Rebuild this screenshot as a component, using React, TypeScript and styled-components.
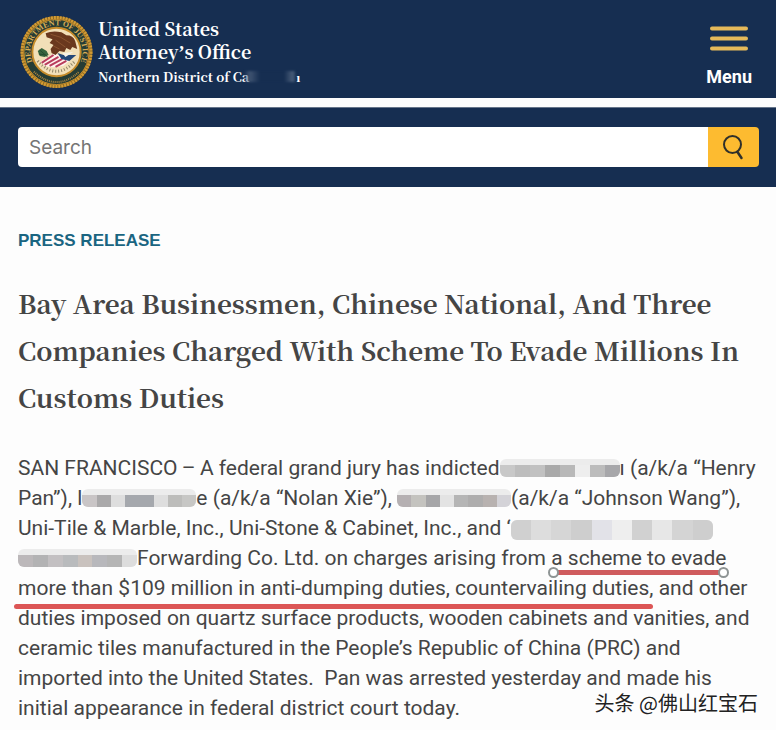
import React from "react";
import styled, { createGlobalStyle } from "styled-components";

const navy = "#162e51";
const gold = "#fdbb30";
const red = "#dc5656";
const sans = `Roboto, "Open Sans", sans-serif`;
const serif = `"Noto Serif CJK SC", "Source Serif Pro", "Liberation Serif", serif`;

const GlobalStyle = createGlobalStyle`
  * { box-sizing: border-box; }
  body { margin: 0; background: #fdfdfd; color: #454545; font-family: ${sans}; }
  h1, p { margin: 0; }
`;

const Page = styled.div`
  overflow-x: hidden;
`;

const Header = styled.header`
  display: flex;
  justify-content: space-between;
  align-items: center;
  height: 98px;
  padding: 6px 24px 0 20px;
  background: ${navy};
`;

const Brand = styled.a`
  display: flex;
  align-items: center;
  gap: 5px;
  color: #fff;
  text-decoration: none;
  font-family: ${serif};
  font-weight: 700;
`;

const BrandText = styled.span`
  display: flex;
  flex-direction: column;
`;

const BrandName = styled.span`
  font-size: 18px;
  line-height: 23px;
`;

const Apostrophe = styled.span`
  font-family: "Liberation Serif", serif;
`;

const District = styled.span`
  display: flex;
  align-items: center;
  font-size: 13px;
  line-height: 23px;
`;

const Smudge = styled.span`
  width: 52px;
  height: 11px;
  margin-left: -5px;
  filter: blur(1px);
  background: linear-gradient(90deg, transparent 0, #3f5371 6px, ${navy} 16px, ${navy} 40px, #4a5e7a 49px, transparent 100%);
`;

const MenuButton = styled.button`
  display: flex;
  flex-direction: column;
  align-items: center;
  gap: 15px;
  padding: 10px 0 0;
  border: 0;
  background: none;
  color: #fff;
  font: 700 18px/22px Roboto, sans-serif;
  cursor: pointer;
`;

const SearchBand = styled.form`
  display: flex;
  margin-top: 9px;
  padding: 19px 17px 20px 18px;
  border-top: 1px solid #66758a;
  background: ${navy};
`;

const SearchInput = styled.input`
  flex: 1;
  min-width: 0;
  height: 40px;
  padding: 0 11px;
  border: 0;
  border-radius: 4px 0 0 4px;
  background: #fff;
  color: #454545;
  font: 400 19px Inter, sans-serif;
  &::placeholder { color: #757575; opacity: 1; }
`;

const SearchButton = styled.button`
  display: grid;
  place-items: center;
  width: 51px;
  height: 40px;
  padding: 0;
  border: 0;
  border-radius: 0 4px 4px 0;
  background: ${gold};
  cursor: pointer;
`;

const Article = styled.main`
  position: relative;
  padding: 43px 18px 7px;
`;

const Kicker = styled.p`
  color: #1a6581;
  font-family: "Liberation Sans", sans-serif;
  font-size: 17px;
  font-weight: 700;
  line-height: 22px;
`;

const Title = styled.h1`
  margin-top: 27px;
  font-family: ${serif};
  font-size: 26px;
  font-weight: 700;
  line-height: 47px;
`;

const Body = styled.p`
  margin-top: 33px;
  font-size: 21px;
  line-height: 30px;
`;

const Line = styled.span`
  display: block;
  white-space: pre;
`;

const Mosaic = styled.span<{ $width: number; $tall?: boolean }>`
  display: inline-flex;
  width: ${(p) => p.$width}px;
  height: ${(p) => (p.$tall ? 20 : 18)}px;
  padding-top: ${(p) => (p.$tall ? 0 : 6)}px;
  vertical-align: ${(p) => (p.$tall ? "-5px" : "-2px")};
  border-radius: 6px;
  background: #ececec;
  overflow: hidden;
`;

const Tile = styled.span<{ $tone: string }>`
  flex: 1;
  background: ${(p) => p.$tone};
`;

const Marked = styled.span`
  position: relative;
`;

const Stroke = styled.span<{ $left: number; $right: number; $top: number; $tone: string }>`
  position: absolute;
  left: ${(p) => p.$left}px;
  right: ${(p) => p.$right}px;
  top: ${(p) => p.$top}px;
  height: 5px;
  border-radius: 3px;
  background: ${(p) => p.$tone};
`;

const Handle = styled.span<{ $end?: boolean }>`
  position: absolute;
  top: -3px;
  ${(p) => (p.$end ? "right" : "left")}: -3px;
  width: 11px;
  height: 11px;
  border: 2px solid #8e9494;
  border-radius: 50%;
  background: #fff;
`;

const Watermark = styled.span`
  position: absolute;
  right: 18px;
  bottom: 13px;
  color: #222;
  font: 400 20px/28px "Noto Sans CJK SC", sans-serif;
  text-shadow: 1px 1px 0 #fff, -1px -1px 0 #fff;
`;

function Redacted({ width, tones, tall }: { width: number; tones: string[]; tall?: boolean }) {
  return (
    <Mosaic $width={width} $tall={tall} aria-hidden="true">
      {tones.map((tone, i) => (
        <Tile key={i} $tone={tone} />
      ))}
    </Mosaic>
  );
}

function Seal() {
  return (
    <svg width="73" height="74" viewBox="0 0 74 74" aria-hidden="true">
      <defs>
        <path id="upper" d="M15.500 52 A26.500 26.500 0 1 1 58.500 52" />
      </defs>
      <circle cx="37" cy="37" r="36.500" fill="#8c6a24" />
      <circle cx="37" cy="37" r="35" fill="none" stroke="#d39b34" strokeWidth="3" strokeDasharray="2 1" />
      <circle cx="37" cy="37" r="33" fill="#253c35" stroke="#c58b2a" />
      <circle cx="37" cy="37" r="24.500" fill="#f2dfb8" stroke="#c58b2a" strokeWidth="2" />
      <text fill="#d9ae55" fontFamily="Liberation Serif, serif" fontSize="8" fontWeight="700">
        <textPath href="#upper" startOffset="50%" textAnchor="middle">DEPARTMENT OF JUSTICE</textPath>
      </text>
      <path d="M14 57 Q37 78 60 57" fill="none" stroke="#a98440" strokeWidth="2" strokeDasharray="1 1" />
      <path d="M18 46 Q37 67 56 46" fill="none" stroke="#8f8468" strokeWidth="3" strokeDasharray="1 2" />
      <path d="M21 47 L35 38 L50 46 L44 51 Q32 54 25 51Z" fill="#fff3ee" />
      <path d="M22 48 L34 40 M25 50 L39 42 M30 51 L43 44 M36 52 L47 46" stroke="#b93d5c" strokeWidth="2" />
      <path d="M18 36 L22 33 L27 36 L29 40 L25 42 L20 41Z" fill="#36643e" />
      <path d="M20 35 L28 42 M19 39 L26 40" stroke="#244930" />
      <path d="M38 38 L44 40 L57 40 L50 46 L42 44Z" fill="#244779" />
      <path d="M43 38 L54 37 L46 42Z" fill="#f7f1e5" />
      <path d="M26 18 Q33 15 42 17 L47 20 Q54 20 56 26 L58 34 L53 32 L51 35 L47 33 L45 37 L40 36 L36 40 L32 38 L31 34 L34 30 L30 28 L33 24 L27 22Z" fill="#6a381e" />
      <path d="M31 19 L41 22 L51 28 M36 25 L46 32 M34 31 L40 34" stroke="#8a5330" fill="none" />
    </svg>
  );
}

export default function App() {
  return (
    <Page>
      <GlobalStyle />
      <Header>
        <Brand href="#">
          <Seal />
          <BrandText>
            <BrandName>United States</BrandName>
            <BrandName>
              Attorney<Apostrophe>’</Apostrophe>s Office
            </BrandName>
            <District>
              Northern District of Ca
              <Smudge />
              ı
            </District>
          </BrandText>
        </Brand>
        <MenuButton type="button">
          <svg width="38" height="25" viewBox="0 0 38 25" aria-hidden="true">
            <path d="M2 2.500H36M2 12.500H36M2 22.500H36" stroke="#e5b95a" strokeWidth="4" strokeLinecap="round" />
          </svg>
          Menu
        </MenuButton>
      </Header>
      <SearchBand role="search" onSubmit={(e) => e.preventDefault()}>
        <SearchInput type="search" placeholder="Search" aria-label="Search" />
        <SearchButton type="submit" aria-label="Submit search">
          <svg width="22" height="26" viewBox="0 0 22 26" fill="none" stroke="#30302a" strokeWidth="2" strokeLinecap="round" aria-hidden="true">
            <circle cx="9.500" cy="10.500" r="8.500" />
            <path d="M14.500 18 L18.500 24" strokeWidth="2.500" />
          </svg>
        </SearchButton>
      </SearchBand>
      <Article>
        <Kicker>PRESS RELEASE</Kicker>
        <Title>
          <Line>Bay Area Businessmen, Chinese National, And Three</Line>
          <Line>Companies Charged With Scheme To Evade Millions In</Line>
          <Line>Customs Duties</Line>
        </Title>
        <Body>
          <Line>
            {"SAN FRANCISCO\u2009–\u2009A federal grand jury has indicted"}
            <Redacted width={120} tones={["#c8c8c8", "#bdbdbd", "#c1c1c1", "#a9a9a9", "#b8b8b8", "#eeeeee", "#bcbcbc", "#a7a7aa"]} />
            {"ı (a/k/a “Henry"}
          </Line>
          <Line>
            {"Pan”), l"}
            <Redacted width={114} tones={["#c9c5c6", "#aaa9aa", "#dedede", "#a5a8ad", "#a5a8ad", "#dedede", "#bdbdbb", "#c7c7c5"]} />
            {"e (a/k/a “Nolan Xie”), "}
            <Redacted width={114} tones={["#b5b0b2", "#c4c3bf", "#a6a6a8", "#e3e3e3", "#b5b5b5", "#aeadad", "#b8b2b0", "#d4d3d8"]} />
            (a/k/a “Johnson Wang”),
          </Line>
          <Line>
            {"Uni-Tile & Marble, Inc., Uni-Stone & Cabinet, Inc., and ‘"}
            <Redacted tall width={202} tones={["#d0d0d0", "#dddddd", "#d6d6d6", "#cecece", "#e2e2e8", "#eeeeee", "#d1d1d1", "#e7e7e7", "#d4d4d4", "#cecece"]} />
          </Line>
          <Line>
            <Redacted width={119} tones={["#bcb8ba", "#b3b3b4", "#c3c0c2", "#b9bbbd", "#c9c2be", "#b8b8bc", "#b5b5b5", "#dddddd"]} />
            {"Forwarding Co. Ltd. on charges arising from "}
            <Marked>
              a scheme to evade
              <Stroke $left={0} $right={0} $top={24} $tone="#cf5b5d">
                <Handle />
                <Handle $end />
              </Stroke>
            </Marked>
          </Line>
          <Line>
            <Marked>
              more than $109 million in anti-dumping duties, countervailing duties,
              <Stroke $left={-4} $right={0} $top={28} $tone={red} />
            </Marked>
            {" and other"}
          </Line>
          <Line>duties imposed on quartz surface products, wooden cabinets and vanities, and</Line>
          <Line>ceramic tiles manufactured in the People’s Republic of China (PRC) and</Line>
          <Line>{"imported into the United States.  Pan was arrested yesterday and made his"}</Line>
          <Line>initial appearance in federal district court today.</Line>
        </Body>
        <Watermark>头条 @佛山红宝石</Watermark>
      </Article>
    </Page>
  );
}
